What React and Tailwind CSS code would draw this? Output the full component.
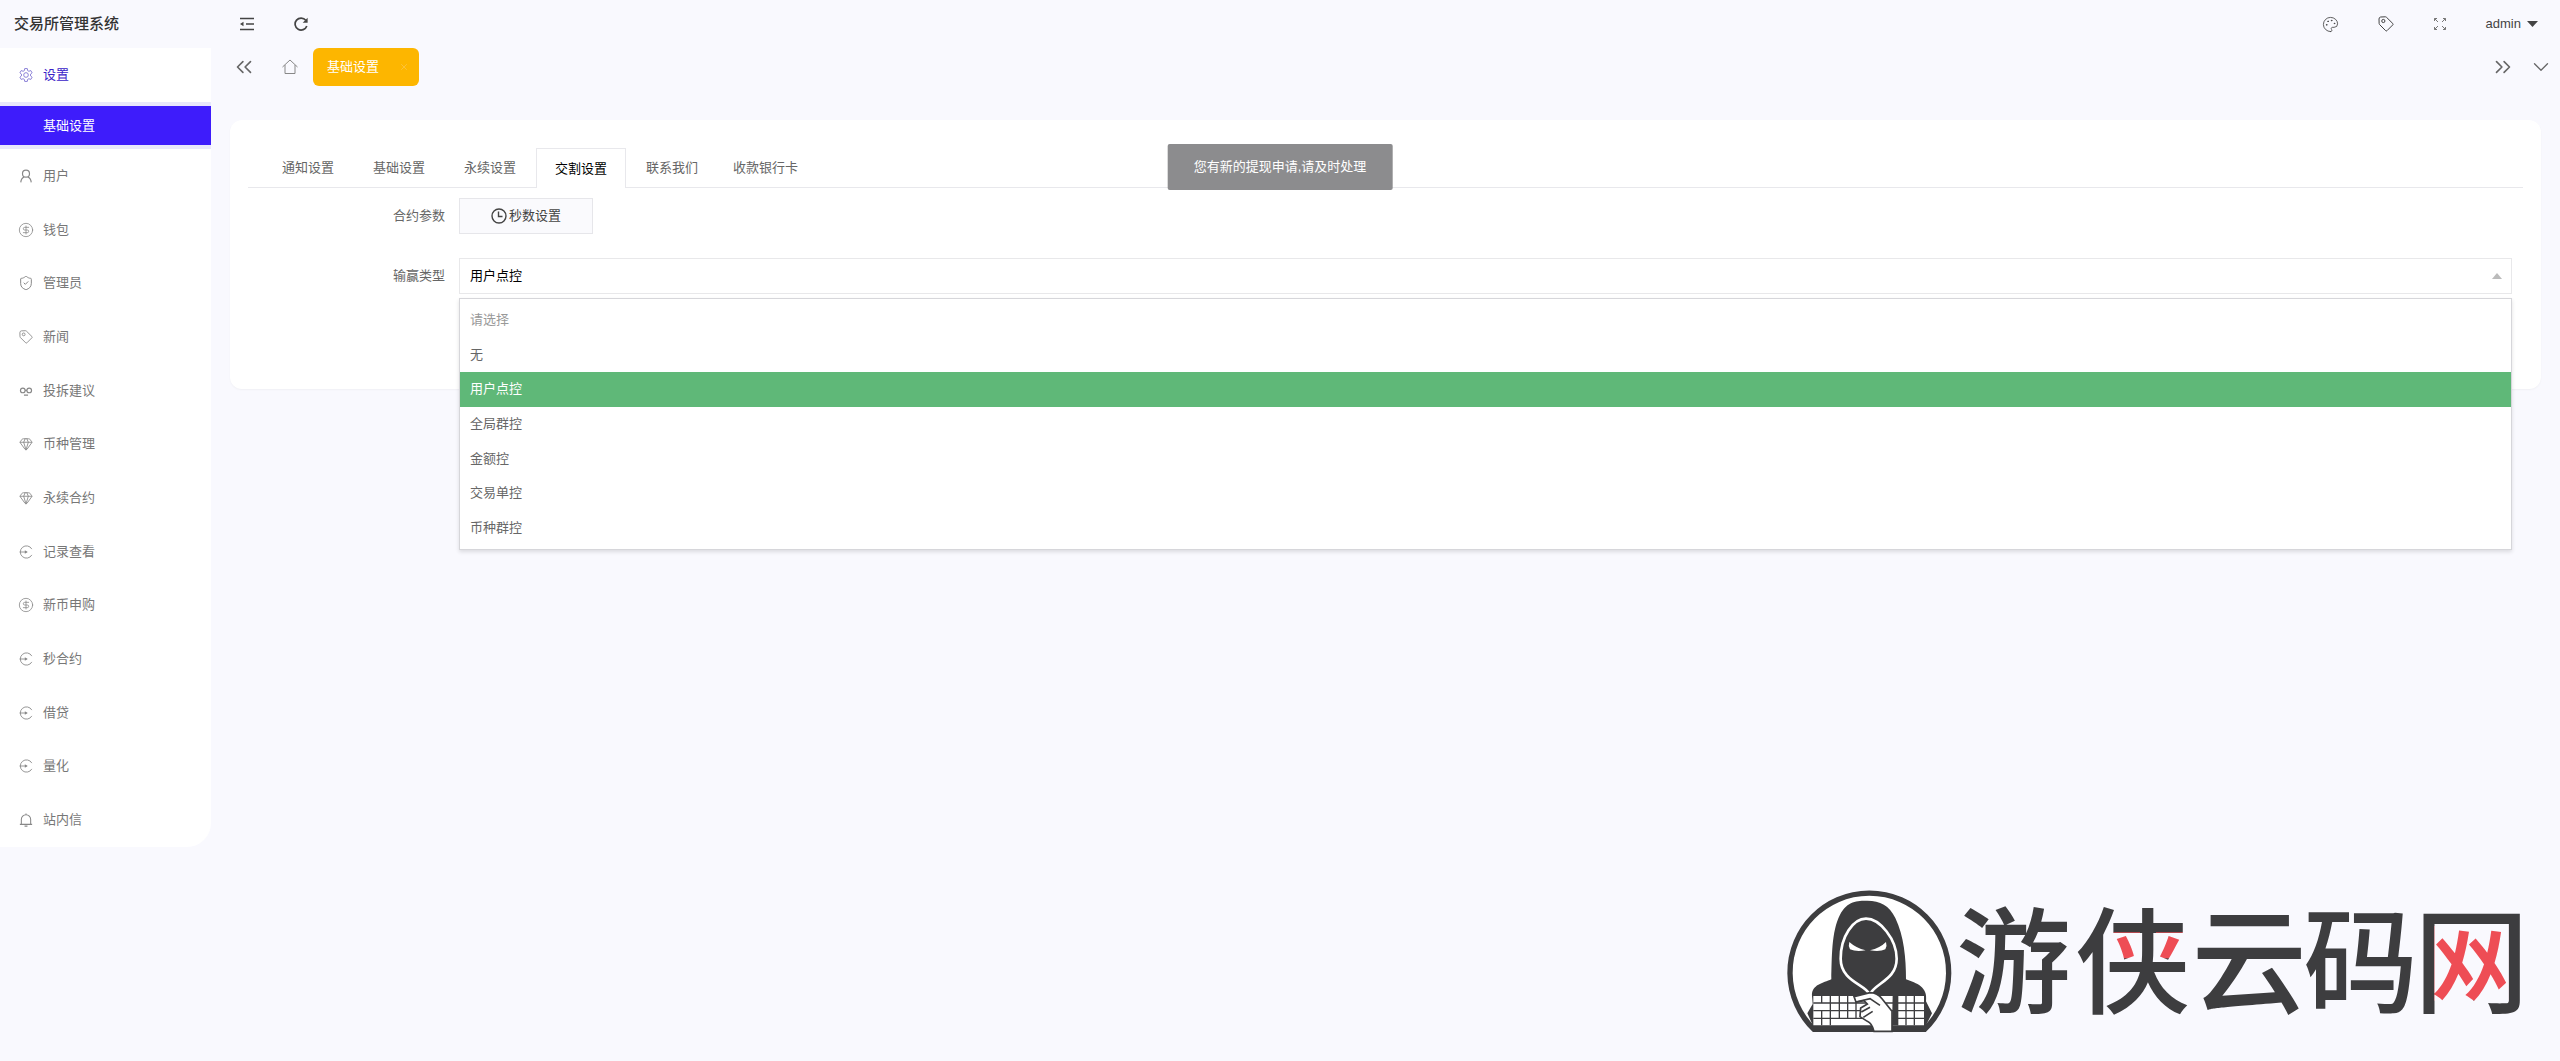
import React, { useState } from 'react';
import {
  ChevronDown,
  ChevronsLeft,
  ChevronsRight,
  CircleDollarSign,
  Gem,
  Palette,
  ShieldCheck,
  X,
} from 'lucide-react';

function GearIcon() {
  return (
    <svg viewBox="0 0 24 24" fill="none" stroke="currentColor" strokeWidth="1.3" strokeLinejoin="round" className="size-[14px]">
      <path d="M9.800 1h4.400l.7 3.500 2 1.100 3.300-1.200 2.300 3.800-2.700 2.300v3l2.700 2.300-2.300 3.800-3.300-1.200-2 1.100-.7 3.500H9.800l-.7-3.500-2-1.100-3.300 1.200-2.300-3.800 2.700-2.300v-3L1.500 8.200l2.300-3.800 3.300 1.200 2-1.100z" />
      <circle cx="12" cy="12" r="4" />
    </svg>
  );
}

function UserIcon() {
  return (
    <svg viewBox="0 0 24 24" fill="none" stroke="currentColor" strokeWidth="2" className="size-[14px]">
      <circle cx="12" cy="8" r="6" />
      <path d="M3 23c.5-5 2.500-8 6-9.500M21 23c-.5-5-2.500-8-6-9.500" />
    </svg>
  );
}

function BellIcon() {
  return (
    <svg viewBox="0 0 24 24" fill="none" stroke="currentColor" strokeWidth="1.8" className="size-[14px]">
      <path d="M1.500 19.500h21M4 19.500V11a8 8 0 0 1 16 0v8.500M12 3V1M9.500 22.500h5" />
    </svg>
  );
}

function HouseIcon() {
  return (
    <svg viewBox="0 0 16 16" fill="none" stroke="currentColor" strokeWidth="1" className="size-4">
      <path d="M.5 8L8 1l7.500 7M3 6v8.500h10V6" />
    </svg>
  );
}

function TagIcon({ className }) {
  return (
    <svg viewBox="0 0 24 24" fill="none" stroke="currentColor" strokeWidth="1.500" strokeLinejoin="round" className={className}>
      <path d="M1.500 4.500q0-2.500 2.500-3l7-.3q1 0 1.800.8l9.400 9.300q1 1 0 2l-8.700 8.700q-1 1-2 0L2.500 13q-.8-.8-.8-1.800z" />
      <circle cx="8" cy="7.500" r="2.400" />
    </svg>
  );
}

function GlassesIcon() {
  return (
    <svg viewBox="0 0 24 24" fill="none" stroke="currentColor" strokeWidth="2" className="size-[14px]">
      <circle cx="6.500" cy="11" r="4" />
      <circle cx="17.500" cy="11" r="4" />
      <path d="M10.500 11h3M8.500 19h7" />
    </svg>
  );
}

function RecordIcon() {
  return (
    <svg viewBox="0 0 24 24" fill="none" stroke="currentColor" strokeWidth="1.500" className="size-[14px]">
      <path d="M22 7A10.500 10.500 0 1 0 22 17" />
      <path d="M1 12h12" />
      <path d="M10 9l5 3-5 3z" fill="currentColor" stroke="none" />
    </svg>
  );
}

function FoldIcon() {
  return (
    <svg viewBox="0 0 14 14" fill="none" stroke="currentColor" strokeWidth="1.500" className="size-[14px]">
      <path d="M0 1.500h14M6 7h8M0 12.500h14" />
      <path d="M0 7l3.500-2.300v4.600z" fill="currentColor" stroke="none" />
    </svg>
  );
}

function RefreshIcon() {
  return (
    <svg viewBox="0 0 14 14" fill="none" stroke="currentColor" strokeWidth="1.700" className="size-[14px]">
      <path d="M11.800 3.300A6 6 0 1 0 12.800 9" />
      <path d="M13.600.8v5H8.700z" fill="currentColor" stroke="none" />
    </svg>
  );
}

function FullscreenIcon() {
  return (
    <svg viewBox="0 0 14 14" fill="none" stroke="currentColor" strokeWidth="1" className="size-[14px]">
      <path d="M1.500 4V1.500H4M10 1.500h2.500V4M12.500 10v2.500H10M4 12.500H1.500V10M1.500 1.500L5 5M12.500 1.500L9 5M12.500 12.500L9 9M1.500 12.500L5 9" />
    </svg>
  );
}

function ClockIcon() {
  return (
    <svg viewBox="0 0 16 16" fill="none" stroke="currentColor" strokeWidth="1.400" className="size-4">
      <circle cx="8" cy="8" r="7" />
      <path d="M7.500 3.500v5h4" />
    </svg>
  );
}

const menu = [
  { name: '用户', icon: <UserIcon /> },
  { name: '钱包', icon: <CircleDollarSign size={16} strokeWidth={1.2} /> },
  { name: '管理员', icon: <ShieldCheck size={16} strokeWidth={1.5} /> },
  { name: '新闻', icon: <TagIcon className="size-[14px]" /> },
  { name: '投拆建议', icon: <GlassesIcon /> },
  { name: '币种管理', icon: <Gem size={14} strokeWidth={1.5} /> },
  { name: '永续合约', icon: <Gem size={14} strokeWidth={1.5} /> },
  { name: '记录查看', icon: <RecordIcon /> },
  { name: '新币申购', icon: <CircleDollarSign size={16} strokeWidth={1.2} /> },
  { name: '秒合约', icon: <RecordIcon /> },
  { name: '借贷', icon: <RecordIcon /> },
  { name: '量化', icon: <RecordIcon /> },
  { name: '站内信', icon: <BellIcon /> },
];

const tabs = ['通知设置', '基础设置', '永续设置', '交割设置', '联系我们', '收款银行卡'];

const winTypes = ['请选择', '无', '用户点控', '全局群控', '金额控', '交易单控', '币种群控'];

function Sidebar() {
  return (
    <aside className="w-[211px] shrink-0">
      <h1 className="flex h-12 items-center pl-[14px] text-[15px] font-medium text-[#333]">交易所管理系统</h1>
      <nav className="rounded-br-3xl bg-white">
        <a href="#settings" className="flex h-[54px] items-center gap-[9px] pl-[18px] text-[#3a22c8]">
          <span className="flex w-4 justify-center text-[#6a5ccc]"><GearIcon /></span>
          设置
        </a>
        <div className="bg-[#e9e7fb] py-1">
          <a href="#basic" className="flex h-[39px] items-center bg-[#3e1cfb] pl-[43px] text-white">基础设置</a>
        </div>
        <ul className="grid min-h-[698px] auto-rows-fr">
          {menu.map((item) => (
            <li key={item.name} className="flex">
              <a href="#menu" className="flex flex-1 items-center gap-[9px] pl-[18px] text-[#777]">
                <span className="flex w-4 justify-center text-[#888]">{item.icon}</span>
                {item.name}
              </a>
            </li>
          ))}
        </ul>
      </nav>
    </aside>
  );
}

function Header() {
  return (
    <header className="text-[#444]">
      <div className="flex h-12 items-center justify-between pr-[22px] pl-[29px]">
        <div className="flex items-center gap-10">
          <button aria-label="收起菜单"><FoldIcon /></button>
          <button aria-label="刷新"><RefreshIcon /></button>
        </div>
        <div className="flex items-center gap-[39px]">
          <button aria-label="主题"><Palette size={17} strokeWidth={1.2} /></button>
          <button aria-label="便签"><TagIcon className="size-4" /></button>
          <button aria-label="全屏" className="text-[#777]"><FullscreenIcon /></button>
          <button className="flex items-center gap-[6px]">
            admin
            <svg viewBox="0 0 11 6" className="h-[6px] w-[11px]"><path d="M0 0h11L5.500 6z" fill="currentColor" /></svg>
          </button>
        </div>
      </div>
      <div className="flex h-[38px] items-center justify-between pr-[6px] pl-5 text-[#666]">
        <div className="flex items-center">
          <button aria-label="向左"><ChevronsLeft size={26} strokeWidth={1.5} /></button>
          <a href="#home" aria-label="主页" className="mr-[15px] ml-[25px] text-[#888]"><HouseIcon /></a>
          <div className="flex h-[38px] w-[106px] items-center justify-between rounded-md bg-[#fdb600] pr-[10px] pl-[14px] text-white">
            基础设置
            <button aria-label="关闭" className="text-[#fbc95a]"><X size={10} strokeWidth={1.5} /></button>
          </div>
        </div>
        <div className="flex items-center gap-3">
          <button aria-label="向右"><ChevronsRight size={26} strokeWidth={1.5} /></button>
          <button aria-label="更多"><ChevronDown size={26} strokeWidth={1.2} /></button>
        </div>
      </div>
    </header>
  );
}

function Watermark() {
  return (
    <svg viewBox="48 48 2235 453" className="pointer-events-none fixed right-[29px] bottom-[26px] w-[745px] overflow-visible">
      <defs>
        <pattern id="xia" patternUnits="userSpaceOnUse" x="0" y="0" width="2400" height="600">
          <rect width="2400" height="600" fill="#3d3d3f" />
          <rect x="1030" y="193" width="80" height="78" fill="#ee4d55" />
          <rect x="1158" y="193" width="90" height="78" fill="#ee4d55" />
        </pattern>
        <pattern id="wang" patternUnits="userSpaceOnUse" x="0" y="0" width="2400" height="600">
          <rect width="2400" height="600" fill="#3d3d3f" />
          <rect x="1993" y="174" width="222" height="224" fill="#ee4d55" />
        </pattern>
      </defs>
      <path d="M132 484A238 238 0 1 1 464 484z" fill="#fff" stroke="#3d3d3f" strokeWidth="16" />
      <path d="M126 384C124 350 160 345 184 334C186 270 184 190 210 140C232 98 262 98 292 98C330 98 358 112 376 150C402 205 408 270 408 334C440 346 474 356 468 400L486 436L462 484H134L112 436L128 408z" fill="#3d3d3f" />
      <path d="M298 378C288 350 212 340 212 272C212 205 250 152 288 152C330 152 380 215 380 272C380 335 316 345 300 378" fill="none" stroke="#fff" strokeWidth="8" />
      <path d="M238 222Q258 240 287 247Q258 252 240 244Q234 234 238 222zM348 222Q330 240 300 247Q330 252 346 244Q352 234 348 222z" fill="#fff" />
      <path d="M130 384H462V472H130z" fill="#fff" />
      <path d="M130 405H462M130 428H462M130 451H462M155 384V405M155 428V472M181 384V472M208 384V450M233 384V450M258 384V450M383 384V472M408 384V472M433 384V472" stroke="#3d3d3f" strokeWidth="4" />
      <path d="M368 384H383V472H366z" fill="#3d3d3f" />
      <path d="M252 386L300 374Q322 374 336 392L366 430V490H312Q306 466 292 460L270 446L272 420L292 408L282 398L258 402z" fill="#fff" stroke="#3d3d3f" strokeWidth="5" />
      <path d="M258 402L300 392L330 412M274 432L300 418M280 448L308 430" fill="none" stroke="#3d3d3f" strokeWidth="5" />
      <g fontFamily='"Noto Sans CJK SC", sans-serif' fontSize="345" fontWeight="500" fill="#3d3d3f">
        <text x="558" y="407">游</text>
        <text x="915" y="407" fill="url(#xia)">侠</text>
        <text x="1265" y="407">云</text>
        <text x="1600" y="407">码</text>
        <text x="1932" y="407" fill="url(#wang)">网</text>
      </g>
    </svg>
  );
}

function App() {
  const [tab, setTab] = useState('交割设置');
  const [winType, setWinType] = useState('用户点控');

  return (
    <div className="flex min-h-screen bg-[#f9f9fe] font-['Liberation_Sans','Noto_Sans_CJK_SC',sans-serif] text-[13px] leading-5">
      <Sidebar />
      <div className="min-w-0 flex-1">
        <Header />
        <main className="mx-[19px] mt-[34px] rounded-xl bg-white px-[18px] pt-7 pb-[95px] shadow-[0_1px_2px_rgba(0,0,0,0.04)]">
          <div role="tablist" className="flex h-10 gap-px border-b border-[#e8e8ec] pl-[15px]">
            {tabs.map((name) => (
              <button
                key={name}
                role="tab"
                aria-selected={name === tab}
                onClick={() => setTab(name)}
                className={
                  name === tab
                    ? '-mb-px border border-b-0 border-[#e8e8ec] bg-white px-[18px] text-black'
                    : 'px-[19px] text-[#666] last:pl-[15px]'
                }
              >
                {name}
              </button>
            ))}
          </div>

          <form className="mr-[11px] pt-[10px]">
            <div className="mb-6 flex items-center">
              <span className="w-[197px] text-right text-[#666]">合约参数</span>
              <button type="button" className="ml-[14px] flex h-9 w-[134px] items-center justify-center gap-[2px] border border-[#e6e6ea] bg-[#fafafd] text-[#444]">
                <ClockIcon />
                秒数设置
              </button>
            </div>

            <div className="flex items-center">
              <label htmlFor="winType" className="w-[197px] text-right text-[#666]">输赢类型</label>
              <div className="relative ml-[14px] flex-1">
                <select
                  id="winType"
                  value={winType}
                  onChange={(e) => setWinType(e.target.value)}
                  className="block h-9 w-full appearance-none border border-[#e8e8ea] bg-white px-[10px] text-black"
                >
                  {winTypes.map((name) => (
                    <option key={name}>{name}</option>
                  ))}
                </select>
                <svg viewBox="0 0 10 6" className="absolute top-[15px] right-[10px] h-[6px] w-[10px]">
                  <path d="M0 6h10L5 0z" fill="#bbb" />
                </svg>
                <ul role="listbox" className="absolute top-10 right-0 left-0 z-10 grid min-h-[252px] auto-rows-fr border border-[#d6d6da] bg-white py-1 shadow-[0_2px_4px_rgba(0,0,0,0.12)]">
                  {winTypes.map((name, i) => (
                    <li
                      key={name}
                      role="option"
                      aria-selected={name === winType}
                      onClick={() => setWinType(name)}
                      className={
                        name === winType
                          ? 'flex items-center bg-[#5fb878] px-[10px] text-white'
                          : i === 0
                            ? 'flex items-center px-[10px] text-[#999]'
                            : 'flex items-center px-[10px] text-[#666]'
                      }
                    >
                      {name}
                    </li>
                  ))}
                </ul>
              </div>
            </div>
          </form>
        </main>
      </div>

      <div role="status" className="fixed top-36 left-1/2 z-20 -translate-x-1/2 rounded-xs bg-[#8c8c8e] px-[26px] py-[13px] text-white">
        您有新的提现申请,请及时处理
      </div>
      <Watermark />
    </div>
  );
}

export default App;
